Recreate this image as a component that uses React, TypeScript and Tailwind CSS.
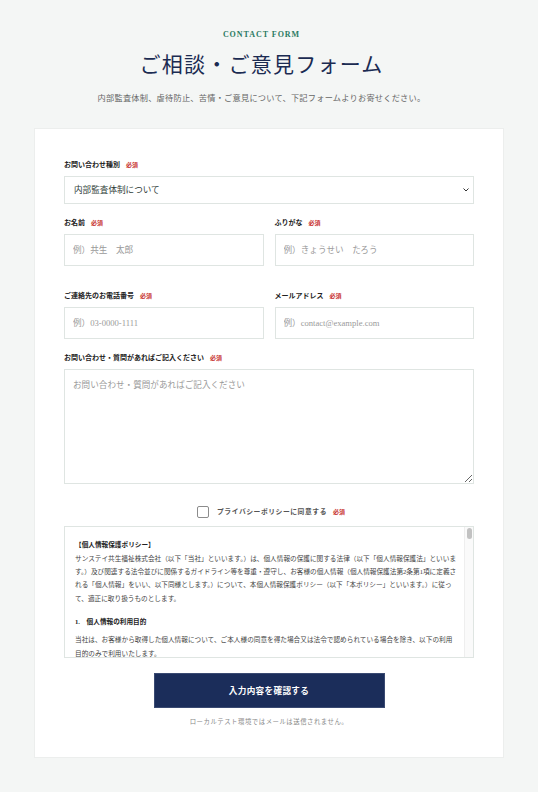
import React from 'react';

const serif = { fontFamily: "'Liberation Serif', 'Noto Sans CJK JP', serif" };

const Required = () => (
  <span className="ml-[6px] text-[6px] font-bold text-[#c7312f]">必須</span>
);

const Label = ({ children }: { children: React.ReactNode }) => (
  <div className="flex items-center h-[10px] leading-[10px] mb-[6px]">
    <span className="text-[7px] font-bold text-[#222]">{children}</span>
    <Required />
  </div>
);

const inputCls =
  'w-full h-[32px] border border-[#dfe5e2] bg-white px-[8px] text-[8.6px] text-[#333] placeholder:text-[#9a9a9a] outline-none';

export default function App() {
  return (
    <div className="min-h-screen bg-[#f4f6f5] pt-[29px] pb-[36px]" style={serif}>
      {/* Header */}
      <div className="pr-[15px]">
        <p className="text-center text-[8px] leading-[12px] font-bold tracking-[0.12em] text-[#2a7a62]">
          CONTACT FORM
        </p>
        <h1 className="mt-[10px] text-center text-[21px] leading-[28px] tracking-[0.06em] text-[#1b2b52]">
          ご相談・ご意見フォーム
        </h1>
        <p className="mt-[13px] text-center text-[8.2px] leading-[14px] tracking-[0.03em] text-[#666]">
          内部監査体制、虐待防止、苦情・ご意見について、下記フォームよりお寄せください。
        </p>
      </div>

      {/* Card */}
      <div className="mx-[34px] mt-[22px] bg-white border border-[#eceeed] px-[29px] pt-[31px] pb-[30px]">
        <Label>お問い合わせ種別</Label>
        <div className="relative">
          <select
            defaultValue="内部監査体制について"
            className="w-full h-[28px] appearance-none border border-[#dfe5e2] bg-white pl-[9px] pr-[20px] text-[8.6px] text-[#2f3d38] outline-none"
            style={serif}
          >
            <option>内部監査体制について</option>
            <option>虐待防止について</option>
            <option>苦情・ご意見について</option>
          </select>
          <svg
            className="pointer-events-none absolute right-[5px] top-[12px] w-[6px] h-[4px]"
            viewBox="0 0 6 4"
            fill="none"
            stroke="#333"
            strokeWidth="1"
          >
            <path d="M0.5 0.5 L3 3 L5.5 0.5" />
          </svg>
        </div>

        <div className="mt-[14px] grid grid-cols-2 gap-x-[11px]">
          <div>
            <Label>お名前</Label>
            <input className={inputCls} style={serif} placeholder="例）共生　太郎" />
          </div>
          <div>
            <Label>ふりがな</Label>
            <input className={inputCls} style={serif} placeholder="例）きょうせい　たろう" />
          </div>
        </div>

        <div className="mt-[25px] grid grid-cols-2 gap-x-[11px]">
          <div>
            <Label>ご連絡先のお電話番号</Label>
            <input className={inputCls} style={serif} placeholder="例）03-0000-1111" />
          </div>
          <div>
            <Label>メールアドレス</Label>
            <input className={inputCls} style={serif} placeholder="例）contact@example.com" />
          </div>
        </div>

        <div className="mt-[14px]">
          <Label>お問い合わせ・質問があればご記入ください</Label>
          <textarea
            className="block w-full h-[115px] border border-[#dfe5e2] bg-white px-[8px] py-[8px] text-[8.6px] leading-[14px] text-[#333] placeholder:text-[#9a9a9a] outline-none"
            style={serif}
            placeholder="お問い合わせ・質問があればご記入ください"
          />
        </div>

        {/* Agreement */}
        <label className="mt-[22px] flex items-center justify-center h-[12px] pl-[4px]">
          <input
            type="checkbox"
            className="appearance-none w-[12px] h-[12px] border border-[#8c8c8c] rounded-[2px] bg-white"
          />
          <span className="ml-[8px] text-[6.8px] font-bold tracking-[0.08em] text-[#555]">
            プライバシーポリシーに同意する
          </span>
          <Required />
        </label>

        {/* Policy */}
        <div className="relative mt-[8px] h-[132px] overflow-hidden border border-[#dfe5e2] bg-white">
          <div className="pl-[10px] pr-[12px] pt-[11px] text-[6.65px] leading-[13.3px] text-[#444] whitespace-nowrap">
            <p className="font-bold text-[#222]">【個人情報保護ポリシー】</p>
            <p>
              サンステイ共生福祉株式会社（以下「当社」といいます。）は、個人情報の保護に関する法律（以下「個人情報保護法」といいま
              <br />
              す。）及び関連する法令並びに関係するガイドライン等を尊重・遵守し、お客様の個人情報（個人情報保護法第2条第1項に定義さ
              <br />
              れる「個人情報」をいい、以下同様とします。）について、本個人情報保護ポリシー（以下「本ポリシー」といいます。）に従っ
              <br />
              て、適正に取り扱うものとします。
            </p>
            <p className="mt-[10px] font-bold text-[#222]">1.　個人情報の利用目的</p>
            <p className="mt-[5px]">
              当社は、お客様から取得した個人情報について、ご本人様の同意を得た場合又は法令で認められている場合を除き、以下の利用
              <br />
              目的のみで利用いたします。
            </p>
          </div>
          <div className="absolute right-0 top-0 bottom-0 w-[9px] bg-[#fafafa] border-l border-[#eeeeee]">
            <div className="absolute left-[2px] top-[1px] w-[5px] h-[11px] rounded-full bg-[#c2c2c2]" />
          </div>
        </div>

        {/* Submit */}
        <div className="mt-[15px] flex justify-center">
          <button className="w-[231px] h-[35px] bg-[#1b2d5a] border border-[#3a4a72] text-white text-[8.6px] font-bold tracking-[0.04em]">
            入力内容を確認する
          </button>
        </div>
        <p className="mt-[9px] text-center text-[6.4px] leading-[10px] tracking-[0.08em] text-[#888]">
          ローカルテスト環境ではメールは送信されません。
        </p>
      </div>
    </div>
  );
}
